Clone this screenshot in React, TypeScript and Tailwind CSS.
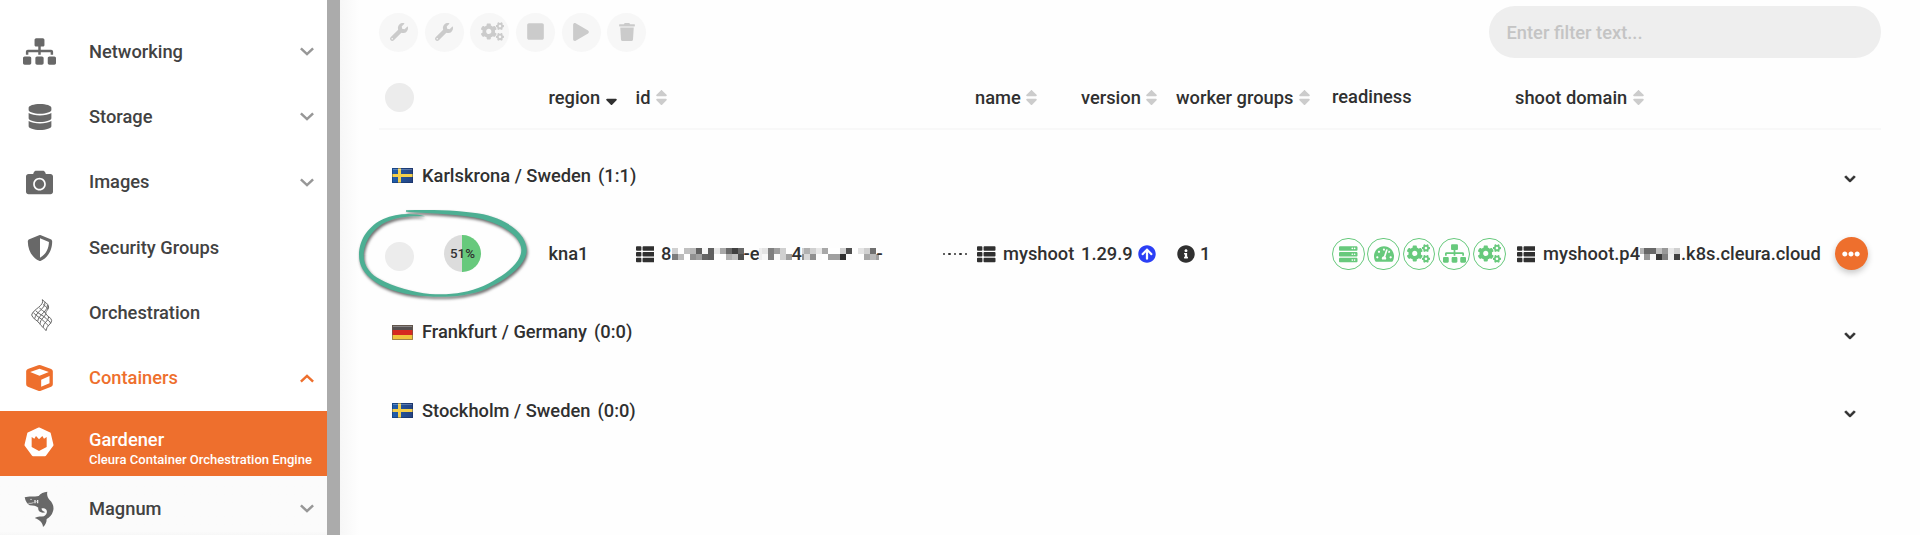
import React from "react";
import {
  FaArrowCircleUp,
  FaCamera,
  FaChevronDown,
  FaCogs,
  FaDatabase,
  FaEllipsisH,
  FaInfoCircle,
  FaPlay,
  FaServer,
  FaShieldAlt,
  FaSitemap,
  FaSort,
  FaSortDown,
  FaStop,
  FaTachometerAlt,
  FaThList,
  FaTrash,
  FaWrench,
} from "react-icons/fa";

function Chevron({ up = false }: { up?: boolean }) {
  return (
    <svg
      viewBox="0 0 14 9"
      className={up ? "h-[9px] w-[14px] text-[#ee6f2d]" : "h-[9px] w-[14px] text-[#979797]"}
      fill="none"
      stroke="currentColor"
      strokeWidth="2.5"
    >
      <path d={up ? "M0.9 7.6 7 1.900l6.100 5.700" : "M0.900 1.400 7 7.100l6.100-5.700"} />
    </svg>
  );
}

function HeatIcon() {
  return (
    <svg viewBox="86 80 72 102" className="h-[34px] w-[24px]" fill="none" stroke="#686868" strokeWidth="3" strokeLinejoin="round">
      <path d="M123 85C130 93 141 96 142 107C143 115 132 119 133 126C135 135 151 138 151 148C151 158 135 163 134 178" />
      <path d="M123 85C131 103 94 114 91 131C94 143 108 146 114 156C120 166 128 168 134 178" />
      <path d="M130 93C136 108 103 122 100 142M138 100C143 117 111 131 109 150" />
      <path d="M133 126C132 138 117 141 116 158M142 137C141 150 126 154 125 168" />
      <path d="M125 99C130 105 137 106 140 113M114 109C120 117 127 118 133 126M103 118C112 128 126 132 136 143C140 148 146 149 148 156M96 124C108 137 120 141 129 151C134 156 138 158 140 163" />
    </svg>
  );
}

function BoxIcon() {
  return (
    <svg viewBox="78 285 80 78" className="h-[26px] w-[27px]">
      <path
        fill="#ee6f2d"
        fillRule="evenodd"
        d="M114 286q4-1.500 8 0l31 11q5 2 5 7v39q0 5-5 7l-31 12q-4 1.500-8 0l-31-12q-5-2-5-7v-39q0-5 5-7zM118 296 90 306l28 11 28-11zM123 329v21l25-10v-22z"
      />
    </svg>
  );
}

function GardenerIcon() {
  return (
    <svg viewBox="70 472 90 90" className="h-[30px] w-[30px]">
      <path
        d="M115 477 147 492 155 526 133 556H97L75 526 83 492Z"
        fill="#fff"
        stroke="#fff"
        strokeWidth="7"
        strokeLinejoin="round"
      />
      <path d="M93 502 101 507 106 499 115 509 125 499 130 507 138 502V532L115 544 93 532Z" fill="#ee6f2d" />
    </svg>
  );
}

function SharkIcon() {
  return (
    <svg viewBox="73 661 92 109" className="h-[36.300px] w-[30.700px]">
      <path
        fill="#686868"
        d="M75 680C86 676 104 679 117 676C123 668 132 664 143 663C141 672 143 680 150 688C160 697 164 711 160 722C157 734 149 741 141 745C141 756 137 763 130 769C129 757 122 748 105 742C114 737 126 738 133 737C141 732 144 724 140 717C136 713 131 712 126 713C125 719 130 722 137 725C124 729 113 722 116 711C109 706 101 704 90 704C83 700 77 692 75 680Z"
      />
      <path d="M106 688v10M114 688v10" stroke="#fff" strokeWidth="3.500" />
      <path d="M106 693h8" stroke="#ccc" strokeWidth="2" />
      <path d="M86 698q8 1 16-2" stroke="#fbfbfb" strokeWidth="2" fill="none" />
      <circle cx="94" cy="686" r="2" fill="#fff" />
    </svg>
  );
}

function NavItem({ icon, label, chevron, active = false }: { icon: React.ReactNode; label: string; chevron?: "up" | "down"; active?: boolean }) {
  return (
    <div className={active ? "flex h-[65.300px] shrink-0 items-center text-[#ee6f2d]" : "flex h-[65.300px] shrink-0 items-center text-[#424242]"}>
      <div className="flex w-[79px] justify-center text-[#686868]">{icon}</div>
      <div className="ml-[10px] flex-1">{label}</div>
      {chevron && (
        <div className="mr-[13px]">
          <Chevron up={chevron === "up"} />
        </div>
      )}
    </div>
  );
}

function Sidebar() {
  return (
    <aside className="flex w-[327px] shrink-0 flex-col overflow-hidden bg-white pt-[19px]">
      <NavItem icon={<FaSitemap size={33} />} label="Networking" chevron="down" />
      <NavItem icon={<FaDatabase size={26} />} label="Storage" chevron="down" />
      <NavItem icon={<FaCamera size={27} />} label="Images" chevron="down" />
      <NavItem icon={<FaShieldAlt size={26} />} label="Security Groups" />
      <NavItem icon={<div className="pl-1 pt-1"><HeatIcon /></div>} label="Orchestration" />
      <NavItem icon={<BoxIcon />} label="Containers" chevron="up" active />
      <div className="flex h-[65.300px] shrink-0 bg-[#ee6f2d] text-white">
        <div className="flex w-[77px] justify-center pt-[16.500px]">
          <GardenerIcon />
        </div>
        <div className="ml-[12px] pt-[18px]">
          <div className="leading-[22px]">Gardener</div>
          <div className="whitespace-nowrap text-[13.050px] leading-[17px]">Cleura Container Orchestration Engine</div>
        </div>
      </div>
      <div className="shrink-0 bg-gradient-to-b from-[#fbfbfb] from-85% to-[#f1f1f1]">
        <NavItem icon={<SharkIcon />} label="Magnum" chevron="down" />
      </div>
    </aside>
  );
}

function Tool({ children }: { children: React.ReactNode }) {
  return <button className="flex size-[39px] items-center justify-center rounded-full bg-[#f7f7f7] pb-[2px] text-[#cbcbcb]">{children}</button>;
}

function Toolbar() {
  return (
    <div className="flex h-[58px] items-end justify-between pt-[6px]">
      <div className="mb-[6px] flex gap-[6.700px]">
        <Tool><FaWrench size={18} /></Tool>
        <Tool><FaWrench size={18} /></Tool>
        <Tool><div className="pl-[5px]"><FaCogs size={23} /></div></Tool>
        <Tool><FaStop size={19} /></Tool>
        <Tool><FaPlay size={18} /></Tool>
        <Tool><FaTrash size={18} /></Tool>
      </div>
      <input
        className="h-[52px] w-[392px] rounded-full bg-[#eeeeee] px-[17.500px] pt-px text-[18.300px] font-medium outline-none placeholder:text-[#c4c4c4]"
        placeholder="Enter filter text..."
      />
    </div>
  );
}

const COLUMNS = "grid grid-cols-[169.500px_87px_339.500px_106px_95px_156px_183px_366px] items-center";

function Heading({ label, sort = "both" }: { label: string; sort?: "both" | "down" | "none" }) {
  return (
    <div className="flex items-center whitespace-nowrap">
      {label}
      {sort === "both" && <FaSort size={19} className="-mt-px ml-[1.500px] text-[#cccccc]" />}
      {sort === "down" && <FaSortDown size={19} className="-mt-px ml-[2px]" />}
    </div>
  );
}

function SwedenFlag() {
  return (
    <svg viewBox="0 0 21 15" className="h-[15px] w-[21px]">
      <defs>
        <linearGradient id="seBlue" x1="0" x2="1" y1="0" y2="0">
          <stop offset="0" stopColor="#1f5fae" />
          <stop offset="1" stopColor="#26427f" />
        </linearGradient>
      </defs>
      <rect width="21" height="15" fill="url(#seBlue)" />
      <path d="M0 7.500h21M7.500 0v15" stroke="#f3cf4b" strokeWidth="3" />
      <path d="M.5.5h20v14H.5z" fill="none" stroke="#10264f" strokeOpacity=".4" />
      <path d="M1 1.500h19" stroke="#fff" strokeOpacity=".25" />
    </svg>
  );
}

function GermanyFlag() {
  return (
    <svg viewBox="0 0 21 15" className="h-[15px] w-[21px]">
      <path d="M0 0h21v5H0z" fill="#555050" />
      <path d="M0 5h21v5H0z" fill="#d62a20" />
      <path d="M0 10h21v5H0z" fill="#f0c43c" />
      <path d="M.5.5h20v14H.5z" fill="none" stroke="#6b5a4a" strokeOpacity=".6" />
      <path d="M1 1.500h19" stroke="#fff" strokeOpacity=".3" />
    </svg>
  );
}

function RegionRow({ flag, name, count }: { flag: React.ReactNode; name: string; count: string }) {
  return (
    <div className="flex h-[78.300px] items-center pl-[13px] pr-[25px]">
      {flag}
      <div className="ml-[9px] flex-1">
        {name}
        <span className="ml-[7px]">{count}</span>
      </div>
      <FaChevronDown size={12} strokeWidth={36} className="mt-[7px] overflow-visible" />
    </div>
  );
}

function Mosaic({ cells }: { cells: [number, string, string][] }) {
  return (
    <div className="flex h-3">
      {cells.map(([width, top, bottom], i) => (
        <div key={i} className="flex flex-col" style={{ width }}>
          <div className="h-1.5" style={{ background: top }} />
          <div className="h-1.5" style={{ background: bottom }} />
        </div>
      ))}
    </div>
  );
}

const ID_A: [number, string, string][] = [
  [6, "#d0d0d0", "#7c7c7c"], [6, "#fff", "#bbb"], [6, "#c0c0c0", "#fff"], [6, "#b8b8b8", "#909090"],
  [6, "#606060", "#a0a0a0"], [6, "#f8f8f8", "#666"], [6, "#606060", "#606060"], [6, "#e8e8e8", "#fff"],
  [6, "#a8a8a8", "#fff"], [6, "#686868", "#b0b0b0"], [6, "#404040", "#c0c0c0"], [6, "#686868", "#505050"],
];
const ID_B: [number, string, string][] = [
  [3, "#eee", "#eee"], [6, "#e4e4e4", "#f8f8f8"], [6, "#808080", "#808080"], [6, "#a0a0a0", "#fcfcfc"],
  [6, "#d0d0d0", "#d0d0d0"], [6, "#fff", "#a0a0a0"],
];
const ID_C: [number, string, string][] = [
  [2, "#d0d0d0", "#909090"], [6, "#b0b0b0", "#d8d8d8"], [6, "#d0d0d0", "#909090"], [6, "#e8e8e8", "#fcfcfc"],
  [6, "#a8a8a8", "#fff"], [6, "#fff", "#a0a0a0"], [6, "#fff", "#a0a0a0"], [6, "#d0d0d0", "#303030"],
  [6, "#505050", "#fcfcfc"], [6, "#fff", "#fff"], [6, "#e4e4e4", "#fff"], [6, "#d0d0d0", "#a8a8a8"],
  [6, "#707070", "#b8b8b8"], [3, "#fff", "#a0a0a0"],
];
const DOMAIN: [number, string, string][] = [
  [4, "#b4b4b4", "#fff"], [6, "#686868", "#989898"], [6, "#686868", "#f8f8f8"], [6, "#c0c0c0", "#383838"],
  [6, "#989898", "#808080"], [6, "#e8e8e8", "#f0f0f0"], [6, "#d0d0d0", "#404040"],
];

function Status({ children }: { children: React.ReactNode }) {
  return (
    <div className="flex size-[32.500px] shrink-0 items-center justify-center rounded-full border-[1.500px] border-[#67c97c] text-[#67c97c]">
      {children}
    </div>
  );
}

function ShootRow() {
  return (
    <div className={COLUMNS + " h-[78.300px] whitespace-nowrap"}>
      <div className="flex items-center pl-[6px]">
        <div className="mt-[5px] size-[29px] rounded-full bg-[#ececec]" />
        <div className="ml-[30px] flex size-[37px] items-center justify-center rounded-full bg-[linear-gradient(90deg,#dcdcdc_49%,#67c97c_49%)] text-[13.300px]">
          51%
        </div>
      </div>
      <div>kna1</div>
      <div className="flex items-center">
        <FaThList size={18.500} />
        <div className="ml-[7px] w-[10.500px]">8</div>
        <Mosaic cells={ID_A} />
        <div className="w-[15px]">-e</div>
        <Mosaic cells={ID_B} />
        <div className="w-[10px]">4</div>
        <Mosaic cells={ID_C} />
        <div className="-ml-[2px]">-</div>
        <div className="ml-auto mr-[8px] flex gap-[2.900px]">
          {[0, 1, 2, 3, 4].map((n) => (
            <div key={n} className="size-[2.500px] rounded-full bg-[#303030]" />
          ))}
        </div>
      </div>
      <div className="flex items-center pl-[2px]">
        <FaThList size={18.500} />
        <div className="ml-[7.500px]">myshoot</div>
      </div>
      <div className="flex items-center">
        1.29.9
        <FaArrowCircleUp size={18} className="ml-[5.500px] text-[#2b3ff5]" />
      </div>
      <div className="flex items-center pl-px">
        <FaInfoCircle size={18} />
        <div className="ml-[5px]">1</div>
      </div>
      <div className="flex gap-[2.800px]">
        <Status><FaServer size={18.500} /></Status>
        <Status><FaTachometerAlt size={20} /></Status>
        <Status><FaCogs size={23} /></Status>
        <Status><FaSitemap size={23} /></Status>
        <Status><FaCogs size={23} /></Status>
      </div>
      <div className="flex items-center pl-[1.500px]">
        <FaThList size={18.500} />
        <div className="ml-[8px]">myshoot.p4</div>
        <Mosaic cells={DOMAIN} />
        <div className="ml-px">.k8s.cleura.cloud</div>
        <button className="ml-auto mr-[13.500px] flex size-[33px] items-center justify-center rounded-full bg-[#ee6f2d] text-white shadow-[0_3px_6px_rgba(0,0,0,0.22)]">
          <FaEllipsisH size={18} />
        </button>
      </div>
    </div>
  );
}

function Annotation() {
  return (
    <svg viewBox="0 0 570 330" className="pointer-events-none absolute left-[350px] top-[195px] h-[110px] w-[190px] overflow-visible drop-shadow-[1px_2px_1.500px_rgba(0,0,0,0.600)]">
      <path
        fill="#4caf93"
        d="M168 46C250 43 340 46 400 58C480 76 530 120 530 165C530 205 480 250 410 281C350 306 280 308 230 304C170 300 110 285 75 260C40 235 27 210 27 180C27 130 60 90 100 72C140 54 190 54 225 64C180 62 140 66 110 80C70 98 41 140 41 182C41 215 65 240 90 253C130 275 190 293 240 297C300 301 350 294 400 273C460 245 514 205 514 165C514 130 470 92 395 72C330 56 250 56 168 50Z"
      />
    </svg>
  );
}

export default function App() {
  return (
    <div className="relative flex h-[535px] w-[1920px] overflow-hidden bg-[#fefefe] font-[Roboto,sans-serif] text-[18.300px] font-medium leading-[22px] text-[#303030]">
      <Sidebar />
      <div className="w-[13px] shrink-0 bg-[#ababab]" />
      <div className="w-[26px] shrink-0 bg-gradient-to-r from-[#f7f7f7] to-[#fefefe] to-75%" />
      <main className="ml-[13px] w-[1502px]">
        <Toolbar />
        <div className={COLUMNS + " h-[71.500px] border-b-2 border-[#f8f8f8] pt-[10px]"}>
          <div className="pl-[6px]">
            <div className="size-[29px] rounded-full bg-[#ececec]" />
          </div>
          <Heading label="region" sort="down" />
          <Heading label="id" />
          <Heading label="name" />
          <Heading label="version" />
          <Heading label="worker groups" />
          <div className="-mt-[2px]"><Heading label="readiness" sort="none" /></div>
          <Heading label="shoot domain" />
        </div>
        <div className="pt-[7px]">
          <RegionRow flag={<SwedenFlag />} name="Karlskrona / Sweden" count="(1:1)" />
          <ShootRow />
          <RegionRow flag={<GermanyFlag />} name="Frankfurt / Germany" count="(0:0)" />
          <RegionRow flag={<SwedenFlag />} name="Stockholm / Sweden" count="(0:0)" />
        </div>
      </main>
      <Annotation />
    </div>
  );
}
